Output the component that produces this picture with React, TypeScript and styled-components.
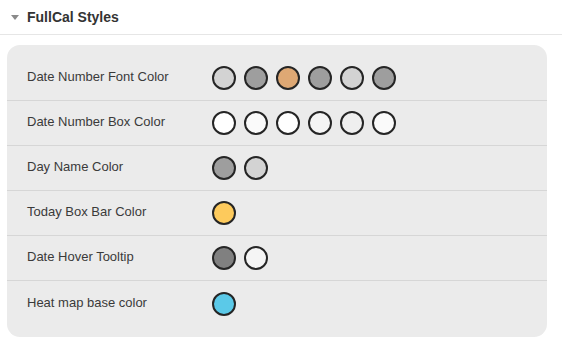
import React from "react";
import styled, { createGlobalStyle } from "styled-components";

const Global = createGlobalStyle`
  html, body { margin: 0; padding: 0; background: #ffffff; }
  body { font-family: "Liberation Sans", Arial, sans-serif; }
`;

const Page = styled.div`
  width: 562px;
  height: 346px;
  display: flex;
  flex-direction: column;
  overflow: hidden;
`;

const Header = styled.div`
  height: 35px;
  box-sizing: border-box;
  border-bottom: 1px solid #e6e6e6;
  display: flex;
  align-items: center;
  padding-left: 11px;
  gap: 8px;
`;

const Caret = styled.span`
  width: 0;
  height: 0;
  border-left: 4.5px solid transparent;
  border-right: 4.5px solid transparent;
  border-top: 5px solid #8a8a8a;
  margin-top: 1px;
`;

const Title = styled.h2`
  margin: 0;
  font-size: 14px;
  font-weight: 700;
  color: #333333;
`;

const Card = styled.div`
  margin: 10px 15px 0 7px;
  background: #ebebeb;
  border-radius: 13px;
  padding: 11px 0 11px;
  display: flex;
  flex-direction: column;
`;

const Row = styled.div<{ $last?: boolean }>`
  height: 45px;
  box-sizing: border-box;
  display: flex;
  align-items: center;
  padding-left: 20px;
  border-bottom: ${(p) => (p.$last ? "none" : "1px solid #d6d6d6")};
`;

const Label = styled.div`
  width: 185px;
  font-size: 13px;
  color: #3a3a3a;
  margin-top: -3px;
`;

const Swatches = styled.div`
  display: flex;
  gap: 8px;
`;

const Swatch = styled.span<{ $c: string }>`
  width: 24px;
  height: 24px;
  box-sizing: border-box;
  border-radius: 50%;
  border: 2px solid #252525;
  background: ${(p) => p.$c};
`;

const rows: { label: string; colors: string[] }[] = [
  { label: "Date Number Font Color", colors: ["#d3d3d3", "#9e9e9e", "#dea874", "#9e9e9e", "#d3d3d3", "#9e9e9e"] },
  { label: "Date Number Box Color", colors: ["#ffffff", "#fafafa", "#ffffff", "#f5f5f5", "#efefef", "#fafafa"] },
  { label: "Day Name Color", colors: ["#9e9e9e", "#d3d3d3"] },
  { label: "Today Box Bar Color", colors: ["#fdca5c"] },
  { label: "Date Hover Tooltip", colors: ["#808080", "#f5f5f5"] },
  { label: "Heat map base color", colors: ["#5bc9e8"] },
];

export default function App() {
  return (
    <Page>
      <Global />
      <Header>
        <Caret />
        <Title>FullCal Styles</Title>
      </Header>
      <Card>
        {rows.map((r, i) => (
          <Row key={r.label} $last={i === rows.length - 1}>
            <Label>{r.label}</Label>
            <Swatches>
              {r.colors.map((c, j) => (
                <Swatch key={j} $c={c} />
              ))}
            </Swatches>
          </Row>
        ))}
      </Card>
    </Page>
  );
}
